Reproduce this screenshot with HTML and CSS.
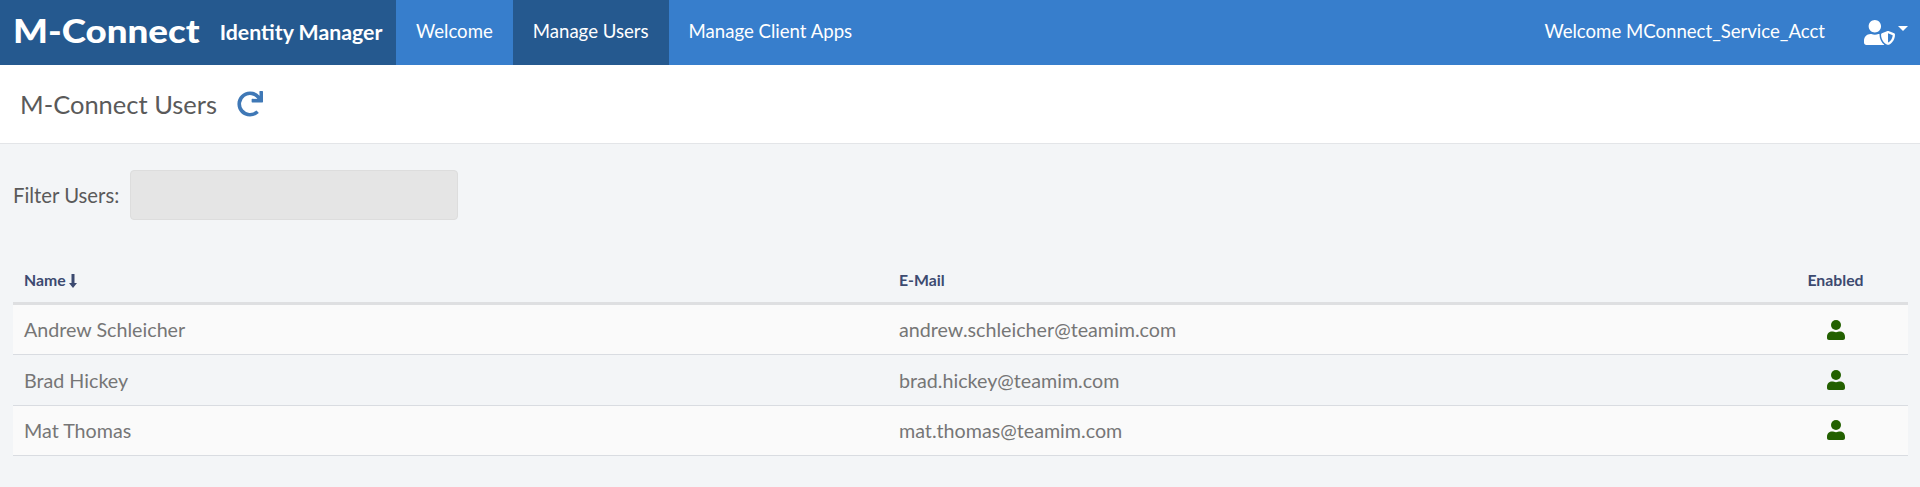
FILE: index.html
```html
<!DOCTYPE html>
<html lang="en">
<head>
<meta charset="utf-8">
<title>M-Connect Identity Manager</title>
<link rel="stylesheet" href="styles.css">
</head>
<body>
<nav class="navbar">
  <a class="brand"><span class="brand-logo">M-Connect</span><span class="brand-sub">Identity Manager</span></a>
  <ul class="nav-links">
    <li class="nav-item">Welcome</li>
    <li class="nav-item active">Manage Users</li>
    <li class="nav-item">Manage Client Apps</li>
  </ul>
  <div class="nav-right">
    <span class="welcome">Welcome MConnect_Service_Acct</span>
    <span class="user-menu">
      <svg class="user-icon" viewBox="0 0 640 512" aria-hidden="true"><path d="M622.3 271.1l-115.2-45c-4.1-1.6-12.6-3.7-22.2 0l-115.2 45c-10.7 4.2-17.7 14-17.7 24.9 0 111.6 68.7 188.8 132.9 213.9 9.6 3.7 18 1.6 22.2 0C558.4 489.9 640 420.5 640 296c0-10.9-7-20.7-17.7-24.9zM496 462.4V273.3l95.5 37.3c-5.6 87.1-60.9 135.4-95.5 151.8zM224 256c70.7 0 128-57.3 128-128S294.7 0 224 0 96 57.3 96 128s57.3 128 128 128zm96 40c0-2.5.8-4.8 1.1-7.2-2.5-.1-4.9-.8-7.5-.8h-16.7c-22.2 10.2-46.9 16-72.9 16s-50.6-5.8-72.9-16h-16.7C60.2 288 0 348.2 0 422.4V464c0 26.5 21.5 48 48 48h352c6.8 0 13.3-1.5 19.2-4-54-42.9-99.2-116.7-99.2-212z"/></svg>
      <span class="caret"></span>
    </span>
  </div>
</nav>
<header class="page-header">
  <h1 class="page-title">M-Connect Users</h1>
  <svg class="refresh" viewBox="0 0 512 512" aria-hidden="true"><path d="M500.33 0h-47.41a12 12 0 0 0-12 12.57l4 82.76A247.42 247.42 0 0 0 256 8C119.34 8 8.05 119.53 8 256.19 7.95 393.07 119 504 256 504a247.1 247.1 0 0 0 166.18-63.91 12 12 0 0 0 .48-17.43l-34-34a12 12 0 0 0-16.38-.55A176 176 0 1 1 402.1 157.8l-101.53-4.87a12 12 0 0 0-12.57 12v47.41a12 12 0 0 0 12 12h200.33a12 12 0 0 0 12-12V12a12 12 0 0 0-12-12z"/></svg>
</header>
<main class="content">
  <div class="filter">
    <label class="filter-label">Filter Users:</label>
    <input class="filter-input" type="text" disabled>
  </div>
  <table class="users">
    <colgroup><col class="col-name"><col><col class="col-enabled"></colgroup>
    <thead>
      <tr>
        <th>Name<svg class="sort" viewBox="0 0 8 14" aria-hidden="true"><path d="M2.500 0h3v9H8L4 14 0 9h2.500z"/></svg></th>
        <th>E-Mail</th>
        <th class="center">Enabled</th>
      </tr>
    </thead>
    <tbody>
      <tr><td>Andrew Schleicher</td><td>andrew.schleicher@teamim.com</td><td class="center"><svg class="person" viewBox="0 0 18 20" aria-hidden="true"><circle cx="9" cy="5" r="5"/><path d="M0 17c0-4 2.500-5.500 5-5.500 1.500 0 2.500.7 4 .7s2.500-.7 4-.7c2.500 0 5 1.500 5 5.500v1c0 1.200-.8 2-2 2H2c-1.200 0-2-.8-2-2z"/></svg></td></tr>
      <tr><td>Brad Hickey</td><td>brad.hickey@teamim.com</td><td class="center"><svg class="person" viewBox="0 0 18 20" aria-hidden="true"><circle cx="9" cy="5" r="5"/><path d="M0 17c0-4 2.500-5.500 5-5.500 1.500 0 2.500.7 4 .7s2.500-.7 4-.7c2.500 0 5 1.500 5 5.500v1c0 1.200-.8 2-2 2H2c-1.200 0-2-.8-2-2z"/></svg></td></tr>
      <tr><td>Mat Thomas</td><td>mat.thomas@teamim.com</td><td class="center"><svg class="person" viewBox="0 0 18 20" aria-hidden="true"><circle cx="9" cy="5" r="5"/><path d="M0 17c0-4 2.500-5.500 5-5.500 1.500 0 2.500.7 4 .7s2.500-.7 4-.7c2.500 0 5 1.500 5 5.500v1c0 1.200-.8 2-2 2H2c-1.200 0-2-.8-2-2z"/></svg></td></tr>
    </tbody>
  </table>
</main>
</body>
</html>
```
FILE: styles.css
```css
* { box-sizing: border-box; }
html, body { margin: 0; height: 100%; }
body {
  font-family: Lato, "Open Sans", sans-serif;
  font-size: 18px;
  background: #f3f5f7;
  color: #555;
  overflow: hidden;
}
.navbar {
  display: flex;
  align-items: stretch;
  height: 65px;
  background: #377ecc;
  color: #fff;
}
.brand {
  display: flex;
  align-items: center;
  width: 396px;
  padding-left: 13px;
  background: #25598f;
  font-weight: 700;
}
.brand-logo {
  display: inline-block;
  font-size: 33px;
  font-weight: 900;
  line-height: 1;
  margin-top: -4px;
  transform: scaleX(1.113);
  transform-origin: left center;
}
.brand-sub { font-size: 21.300px; margin-left: 39px; line-height: 1; margin-top: 1px; }
.nav-links { display: flex; list-style: none; margin: 0; padding: 0; }
.nav-item {
  display: flex;
  align-items: center;
  padding: 0 20px 3px;
  font-size: 18.600px;
}
.nav-item.active { background: #25598f; }
.nav-right {
  display: flex;
  align-items: center;
  margin-left: auto;
  padding-right: 12px;
}
.welcome { font-size: 18.600px; margin-top: -3px; }
.user-menu { display: flex; align-items: center; margin-left: 39px; }
.user-icon { width: 31px; height: 25px; fill: #fff; }
.caret {
  width: 0;
  height: 0;
  margin: -9px 0 0 3px;
  border-top: 5px solid #fff;
  border-left: 5px solid transparent;
  border-right: 5px solid transparent;
}
.page-header {
  display: flex;
  align-items: center;
  height: 79px;
  padding-left: 20px;
  background: #fff;
  border-bottom: 1px solid #e3e5e8;
}
.page-title {
  margin: 0;
  font-size: 25.500px;
  font-weight: 400;
  color: #5a5a5a;
}
.refresh { width: 26px; height: 26px; margin-left: 20px; fill: #3f78b6; }
.content { padding: 26px 12px 0 13px; }
.filter { display: flex; align-items: center; height: 50px; }
.filter-label { font-size: 20.300px; color: #5a5a5a; }
.filter-input {
  width: 328px;
  height: 50px;
  margin-left: 11px;
  background: #e5e5e5;
  border: 1px solid #dddddd;
  border-radius: 4px;
}
.users {
  width: 100%;
  margin-top: 34px;
  border-collapse: separate;
  border-spacing: 0;
  table-layout: fixed;
}
.col-name { width: 875px; }
.col-enabled { width: 145px; }
.users th {
  height: 51px;
  padding: 2px 11px 0;
  text-align: left;
  font-size: 15.800px;
  font-weight: 700;
  color: #3c4a70;
  border-bottom: 3px solid #dedfe1;
}
.users td {
  height: 50.400px;
  padding: 0 11px;
  font-size: 19.700px;
  color: #767676;
  border-bottom: 1px solid #d9dce1;
}
.users tbody tr:nth-child(odd) { background: #fafafa; }
.users .center { text-align: center; }
.sort { width: 8px; height: 14px; margin-left: 3px; fill: #3c4a70; vertical-align: -2px; }
.person { display: block; width: 18px; height: 20px; margin: 0 auto; fill: #236000; }
```
